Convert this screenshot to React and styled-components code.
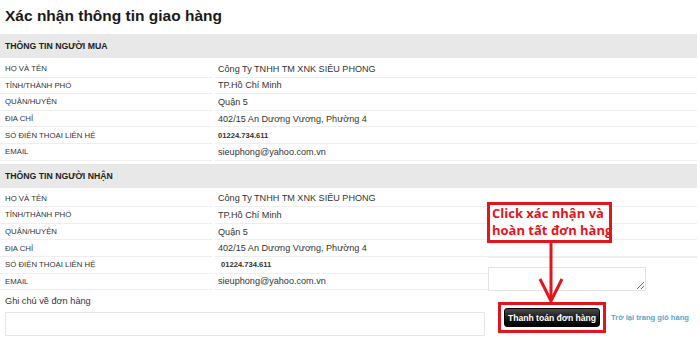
import React from 'react'
import styled, { createGlobalStyle } from 'styled-components'

const GlobalStyle = createGlobalStyle`
  html, body { margin: 0; padding: 0; background: #fff; }
  body { font-family: "Liberation Sans", Arial, sans-serif; color: #333; }
`

const buyer = [
  ['Họ và tên', 'Công Ty TNHH TM XNK SIÊU PHONG'],
  ['Tỉnh/Thành phố', 'TP.Hồ Chí Minh'],
  ['Quận/Huyện', 'Quận 5'],
  ['Địa chỉ', '402/15 An Dương Vương, Phường 4'],
  ['Số điện thoại liên hệ', '01224.734.611', 'phone'],
  ['Email', 'sieuphong@yahoo.com.vn'],
]

const InfoSection = ({ title, rows, indentPhone }) => (
  <Section>
    <SectionHead>{title}</SectionHead>
    <Table>
      {rows.map(([label, value, kind]) => (
        <Row key={label}>
          <Label>{label}</Label>
          <Value $phone={kind === 'phone'} $indent={kind === 'phone' && indentPhone}>{value}</Value>
        </Row>
      ))}
    </Table>
  </Section>
)

const App = () => {
  return (
    <>
      <GlobalStyle />
      <Page>
        <Title>Xác nhận thông tin giao hàng</Title>
        <InfoSection title="Thông tin người mua" rows={buyer} />
        <InfoSection title="Thông tin người nhận" rows={buyer} indentPhone />
        <Footer>
          <NoteCol>
            <NoteLabel>Ghi chú về đơn hàng</NoteLabel>
            <NoteArea />
          </NoteCol>
          <Actions>
            <Highlight>
              <PayButton>Thanh toán đơn hàng</PayButton>
            </Highlight>
            <BackLink href="#">Trở lại trang giỏ hàng</BackLink>
          </Actions>
        </Footer>

        <SidePanel>
          <SideArea />
        </SidePanel>

        <Callout>Click xác nhận và<br />hoàn tất đơn hàng</Callout>
        <Arrow width="32" height="62" viewBox="0 0 32 62">
          <path d="M15 0 V59" stroke="#e3141c" strokeWidth="3" fill="none" />
          <path d="M4 37 L15 59 L26 37" stroke="#e3141c" strokeWidth="3" fill="none" strokeLinejoin="miter" />
        </Arrow>
      </Page>
    </>
  )
}

const Page = styled.div`
  position: relative;
  width: 697px;
  height: 350px;
  overflow: hidden;
`

const Title = styled.h1`
  margin: 0;
  padding: 7px 5px 0;
  height: 28px;
  box-sizing: border-box;
  font-size: 15.5px;
  font-weight: bold;
  color: #1a1a1a;
  line-height: 18px;
`

const Section = styled.div`
  margin-top: 6px;
  & + & { margin-top: 3px; }
`

const SectionHead = styled.div`
  height: 24px;
  background: #e8e8e8;
  padding: 0 5px;
  display: flex;
  align-items: center;
  font-size: 8.7px;
  font-weight: bold;
  text-transform: uppercase;
  color: #222;
`

const Table = styled.div`
  padding-top: 3px;
`

const Row = styled.div`
  display: grid;
  grid-template-columns: 212px 1fr;
  column-gap: 3px;
  height: 16.6px;
`

const Cell = styled.div`
  display: flex;
  align-items: center;
  border-bottom: 1px solid #eeeeee;
  box-sizing: border-box;
  height: 100%;
  white-space: nowrap;
`

const Label = styled(Cell)`
  padding-left: 5px;
  font-size: 7.8px;
  text-transform: uppercase;
  color: #333;
`

const Value = styled(Cell)`
  padding-left: ${p => (p.$indent ? '6px' : '3px')};
  font-size: ${p => (p.$phone ? '7.6px' : '9.1px')};
  font-weight: ${p => (p.$phone ? 'bold' : 'normal')};
  color: #333;
`

const Footer = styled.div`
  display: flex;
  align-items: flex-start;
`

const NoteCol = styled.div`
  width: 480px;
  padding-left: 5px;
  padding-top: 6px;
`

const NoteLabel = styled.div`
  font-size: 9.2px;
  color: #333;
  height: 14px;
`

const NoteArea = styled.textarea`
  display: block;
  width: 480px;
  height: 24px;
  box-sizing: border-box;
  border: 1px solid #e6e6e6;
  resize: none;
  margin: 2px 0 0;
`

const Actions = styled.div`
  display: flex;
  align-items: center;
  margin-left: 13px;
  margin-top: 12px;
`

const Highlight = styled.div`
  border: 3px solid #e3141c;
  padding: 3px;
`

const PayButton = styled.button`
  width: 96px;
  height: 19px;
  border: 1px solid #000;
  border-radius: 3px;
  background: linear-gradient(#4a4a4a, #161616 55%, #000);
  color: #fff;
  font-family: "Liberation Sans", Arial, sans-serif;
  font-size: 8.6px;
  font-weight: bold;
  padding: 0;
  display: block;
`

const BackLink = styled.a`
  margin-left: 5px;
  font-size: 7.6px;
  font-weight: bold;
  color: #5aa6cc;
  text-decoration: none;
  white-space: nowrap;
`

const SidePanel = styled.div`
  position: absolute;
  left: 488px;
  top: 257px;
  width: 209px;
  height: 44px;
  background: #fff;
  border-top: 1px solid #eeeeee;
  padding-top: 9px;
  box-sizing: border-box;
`

const SideArea = styled.textarea`
  display: block;
  width: 158px;
  height: 24px;
  box-sizing: border-box;
  border: 1px solid #e3e3e3;
  margin: 0;
`

const Callout = styled.div`
  position: absolute;
  left: 487px;
  top: 202px;
  width: 125px;
  height: 41px;
  box-sizing: border-box;
  border: 3px solid #e3141c;
  background: #fff;
  padding: 0 0 0 2px;
  font-family: "Open Sans", sans-serif;
  font-weight: bold;
  font-size: 13px;
  line-height: 17px;
  color: #e3141c;
  white-space: nowrap;
`

const Arrow = styled.svg`
  position: absolute;
  left: 536px;
  top: 242px;
`

export default App
